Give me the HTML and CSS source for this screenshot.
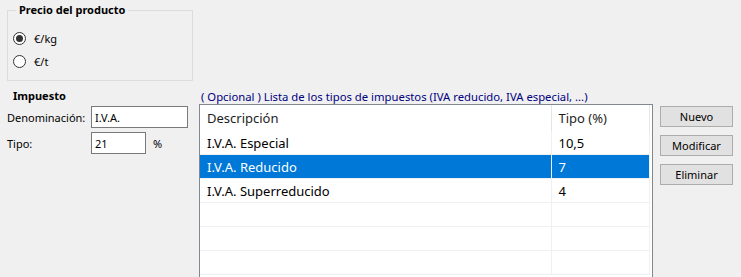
FILE: index.html
```html
<!DOCTYPE html>
<html>
<head>
    <meta charset="utf-8">
    <title>Impuestos</title>
    <link rel="stylesheet" href="styles.css">
</head>
<body>
    <fieldset class="precio">
        <legend>Precio del producto</legend>
        <label class="opcion"><span class="radio checked"></span>€/kg</label>
        <label class="opcion"><span class="radio"></span>€/t</label>
    </fieldset>

    <div class="fila">
        <div class="impuesto">
            <div class="titulo">Impuesto</div>
            <div class="campo">
                <label class="etiqueta">Denominación:</label>
                <input type="text" class="caja caja-larga" value="I.V.A.">
            </div>
            <div class="campo">
                <label class="etiqueta">Tipo:</label>
                <input type="text" class="caja caja-corta" value="21">
                <span class="unidad">%</span>
            </div>
        </div>

        <div class="lista">
            <div class="nota">( Opcional ) Lista de los tipos de impuestos (IVA reducido, IVA especial, ...)</div>
            <div class="tabla">
                <table id="tiposTable">
                    <colgroup>
                        <col class="col-desc" />
                        <col class="col-tipo" />
                    </colgroup>
                    <thead>
                        <tr>
                            <th>Descripción</th>
                            <th>Tipo (%)</th>
                        </tr>
                    </thead>
                    <tbody>
                        <tr><td>I.V.A. Especial</td><td>10,5</td></tr>
                        <tr class="sel"><td>I.V.A. Reducido</td><td>7</td></tr>
                        <tr><td>I.V.A. Superreducido</td><td>4</td></tr>
                        <tr><td></td><td></td></tr>
                        <tr><td></td><td></td></tr>
                        <tr><td></td><td></td></tr>
                    </tbody>
                </table>
            </div>
        </div>

        <div class="botones">
            <button type="button">Nuevo</button>
            <button type="button">Modificar</button>
            <button type="button">Eliminar</button>
        </div>
    </div>
</body>
</html>
```

FILE: styles.css
```css
body {
    margin: 0;
    padding: 3px 0 0 7px;
    background: #F0F0F0;
    font-family: "Noto Sans", sans-serif;
    font-size: 11px;
    color: #000;
    overflow: hidden;
}

/* grupo precio */
.precio {
    width: 179px;
    height: 66px;
    margin: 0;
    padding: 10px 0 0 5px;
    border: 1px solid #DCDCDC;
    box-sizing: content-box;
}
.precio legend {
    margin-left: 3px;
    padding: 0 3px;
    font-weight: bold;
    line-height: 14px;
}
.opcion {
    display: flex;
    align-items: center;
    height: 23px;
}
.radio {
    width: 11px;
    height: 11px;
    margin-right: 8px;
    border: 1px solid #333;
    border-radius: 50%;
    background: #fff;
    position: relative;
}
.radio.checked::after {
    content: "";
    position: absolute;
    left: 2px;
    top: 2px;
    width: 7px;
    height: 7px;
    border-radius: 50%;
    background: #333;
}

/* fila inferior */
.fila {
    display: flex;
    margin-top: 8px;
}
.impuesto {
    width: 181px;
}
.titulo {
    padding-left: 6px;
    font-weight: bold;
    line-height: 14px;
}
.campo {
    display: flex;
    align-items: center;
    margin-top: 3px;
}
.campo + .campo {
    margin-top: 4px;
}
.etiqueta {
    width: 84px;
}
.caja {
    height: 22px;
    margin: 0;
    padding: 0 3px;
    border: 1px solid #7A7A7A;
    box-sizing: border-box;
    font-family: inherit;
    font-size: 11px;
    background: #fff;
}
.caja-larga { width: 97px; }
.caja-corta { width: 55px; }
.unidad { margin-left: 7px; }

.lista {
    margin-left: 11px;
    width: 454px;
}
.nota {
    padding-left: 2px;
    color: #000080;
    font-size: 11.3px;
    line-height: 15px;
}
.tabla {
    height: 180px;
    border: 1px solid #828790;
    background: #fff;
}
table {
    width: 450px;
    border-collapse: collapse;
    font-size: 13px;
}
.col-desc { width: 351px; }
th {
    height: 26px;
    padding: 0 7px;
    text-align: left;
    font-weight: normal;
    color: #1E1E1E;
    border-right: 1px solid #E5E5E5;
}
td {
    height: 23px;
    padding: 0 7px;
    border-bottom: 1px solid #F0F0F0;
    border-right: 1px solid #F0F0F0;
}
tr.sel td {
    background: #0078D7;
    color: #fff;
}

.botones {
    display: flex;
    flex-direction: column;
    gap: 8px;
    margin: 17px 0 0 7px;
}
.botones button {
    width: 73px;
    height: 21px;
    padding: 0;
    border: 1px solid #ADADAD;
    background: #E1E1E1;
    font-family: inherit;
    font-size: 11px;
    color: #000;
}
```
